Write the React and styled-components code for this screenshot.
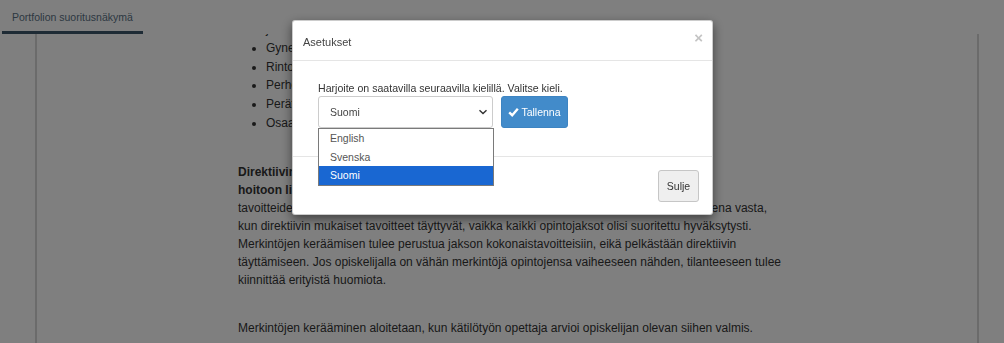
import React from "react";
import styled, { createGlobalStyle } from "styled-components";

const GlobalStyle = createGlobalStyle`
  html, body {
    margin: 0;
    padding: 0;
    height: 100%;
    overflow: hidden;
    background: #ffffff;
    font-family: "Liberation Sans", Arial, sans-serif;
  }
`;

const Page = styled.div`
  height: 100vh;
  display: flex;
  flex-direction: column;
  color: #333;
`;

const TopBar = styled.div`
  height: 34px;
  flex: 0 0 34px;
  display: flex;
  background: #fff;
  position: relative;
  z-index: 1;
`;

const Tab = styled.div`
  margin-left: 2px;
  width: 141px;
  box-sizing: border-box;
  padding: 3px 0 0 10px;
  display: flex;
  align-items: center;
  font-size: 10.5px;
  color: #5a7184;
  border-bottom: 3px solid #3c566a;
`;

const Panel = styled.div`
  flex: 1;
  margin: 0 25px 0 35px;
  border-left: 2px solid #d6d6d6;
  border-right: 2px solid #d6d6d6;
  overflow: hidden;
`;

const Column = styled.div`
  width: 548px;
  margin: -14px 0 0 201px;
  font-size: 12px;
  color: #333;
`;

const List = styled.ul`
  margin: 0;
  padding-left: 28px;
  list-style: disc;
  line-height: 18.75px;
`;

const Para = styled.p`
  margin: 30px 0 0;
  line-height: 18px;

  strong {
    font-weight: bold;
  }
`;

const Backdrop = styled.div`
  position: fixed;
  inset: 0;
  background: rgba(0, 0, 0, 0.5);
  z-index: 10;
`;

const Modal = styled.div`
  width: 421px;
  margin: 20px 0 0 292px;
  background: #fff;
  border: 1px solid rgba(0, 0, 0, 0.2);
  border-radius: 3px;
  box-shadow: 0 4px 11px rgba(0, 0, 0, 0.5);
  box-sizing: border-box;
  font-size: 10.5px;
  color: #333;
`;

const ModalHeader = styled.div`
  height: 40px;
  box-sizing: border-box;
  display: flex;
  align-items: center;
  justify-content: space-between;
  padding: 0 9px 0 10px;
  border-bottom: 1px solid #e5e5e5;
`;

const Title = styled.div`
  font-size: 11px;
  color: #444;
  padding-top: 2px;
`;

const CloseX = styled.span`
  align-self: flex-start;
  margin-top: 9px;
  font-size: 15px;
  font-weight: bold;
  line-height: 1;
  color: #c4c4c4;
  cursor: pointer;
`;

const ModalBody = styled.div`
  padding: 20px 24px 28px 25px;
`;

const Lead = styled.div`
  font-size: 10.6px;
  line-height: 14px;
  margin-bottom: 1px;
`;

const Row = styled.div`
  display: flex;
  gap: 8px;
`;

const SelectWrap = styled.div`
  position: relative;
`;

const SelectBox = styled.div`
  width: 175px;
  height: 32px;
  box-sizing: border-box;
  border: 1px solid #ccc;
  border-radius: 3px;
  display: flex;
  align-items: center;
  justify-content: space-between;
  padding: 0 4px 0 11px;
  color: #444;
`;

const Options = styled.ul`
  position: absolute;
  left: 0;
  top: 100%;
  width: 176px;
  margin: 0;
  padding: 0;
  list-style: none;
  box-sizing: border-box;
  border: 1px solid #7a7a7a;
  background: #fff;
  z-index: 2;
`;

const Option = styled.li`
  height: 18.5px;
  line-height: 18.5px;
  padding-left: 11px;
  color: ${(p) => (p.selected ? "#fff" : "#555")};
  background: ${(p) => (p.selected ? "#1967d2" : "#fff")};
`;

const PrimaryButton = styled.button`
  width: 67px;
  height: 32px;
  display: flex;
  align-items: center;
  justify-content: center;
  gap: 2px;
  padding: 0;
  font-family: inherit;
  font-size: 10.5px;
  color: #fff;
  background: #428bca;
  border: 1px solid #3d84c2;
  border-radius: 3px;
`;

const ModalFooter = styled.div`
  border-top: 1px solid #e5e5e5;
  display: flex;
  justify-content: flex-end;
  padding: 13px 13px 12px;
`;

const DefaultButton = styled.button`
  width: 41px;
  height: 32px;
  padding: 0;
  font-family: inherit;
  font-size: 10.5px;
  color: #333;
  background: #efefef;
  border: 1px solid #c6c6c6;
  border-radius: 3px;
`;

const Chevron = () => (
  <svg width="10" height="10" viewBox="0 0 10 10">
    <path d="M1.5 3.2 L5 6.6 L8.5 3.2" fill="none" stroke="#333" strokeWidth="1.4" />
  </svg>
);

const Check = () => (
  <svg width="11" height="10" viewBox="0 0 11 10">
    <path d="M1.2 5.4 L4.2 8.2 L9.8 1.8" fill="none" stroke="#fff" strokeWidth="2.4" />
  </svg>
);

const languages = ["English", "Svenska", "Suomi"];

export default function App() {
  return (
    <>
      <GlobalStyle />
      <Page>
        <TopBar>
          <Tab>Portfolion suoritusnäkymä</Tab>
        </TopBar>
        <Panel>
          <Column>
            <List>
              <li>jälkitarkastus ja imetysohjaus</li>
              <li>Gynekologinen hoitotyö</li>
              <li>Rintojen tutkiminen</li>
              <li>Perhevalmennus</li>
              <li>Perätilasynnytys</li>
              <li>Osaamisen arviointi</li>
            </List>
            <Para>
              <strong>
                Direktiivin mukaiset merkinnät kerätään synnytyksen ja sen
                <br />
                hoitoon liittyvistä tilanteista.
              </strong>
              <br />
              tavoitteiden mukaisesti, ja opintojakson harjoittelun voi hyväksyä
              suoritetuksi kokonaisuutena vasta,
              <br />
              kun direktiivin mukaiset tavoitteet täyttyvät, vaikka kaikki
              opintojaksot olisi suoritettu hyväksytysti. Merkintöjen keräämisen
              tulee perustua jakson kokonaistavoitteisiin, eikä pelkästään
              direktiivin täyttämiseen. Jos opiskelijalla on vähän merkintöjä
              opintojensa vaiheeseen nähden, tilanteeseen tulee kiinnittää
              erityistä huomiota.
            </Para>
            <Para>
              Merkintöjen kerääminen aloitetaan, kun kätilötyön opettaja arvioi
              opiskelijan olevan siihen valmis.
            </Para>
          </Column>
        </Panel>
      </Page>
      <Backdrop>
        <Modal>
          <ModalHeader>
            <Title>Asetukset</Title>
            <CloseX>×</CloseX>
          </ModalHeader>
          <ModalBody>
            <Lead>Harjoite on saatavilla seuraavilla kielillä. Valitse kieli.</Lead>
            <Row>
              <SelectWrap>
                <SelectBox>
                  <span>Suomi</span>
                  <Chevron />
                </SelectBox>
                <Options>
                  {languages.map((l) => (
                    <Option key={l} selected={l === "Suomi"}>
                      {l}
                    </Option>
                  ))}
                </Options>
              </SelectWrap>
              <PrimaryButton>
                <Check />
                Tallenna
              </PrimaryButton>
            </Row>
          </ModalBody>
          <ModalFooter>
            <DefaultButton>Sulje</DefaultButton>
          </ModalFooter>
        </Modal>
      </Backdrop>
    </>
  );
}
